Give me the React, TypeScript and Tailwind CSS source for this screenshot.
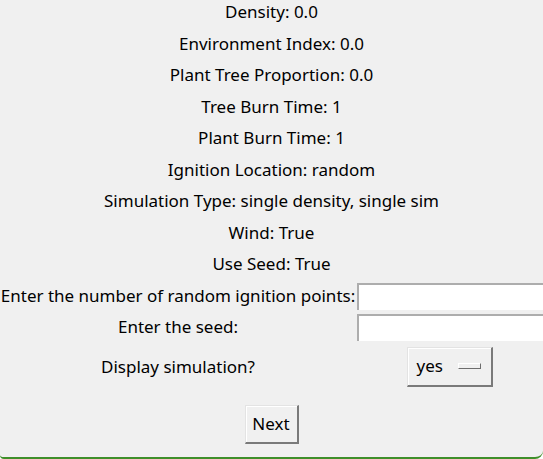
import React from "react";

const font = { fontFamily: '"Noto Sans", "Open Sans", sans-serif' };

function Row({ children }: { children: React.ReactNode }) {
  return (
    <div className="h-[31.5px] flex items-center justify-center whitespace-nowrap text-[17px] text-black">
      {children}
    </div>
  );
}

function Entry() {
  return (
    <div className="h-[27px] w-[200px] bg-white border-t-2 border-l-2 border-[#adadad]" />
  );
}

export default function App() {
  const info = [
    "Density: 0.0",
    "Environment Index: 0.0",
    "Plant Tree Proportion: 0.0",
    "Tree Burn Time: 1",
    "Plant Burn Time: 1",
    "Ignition Location: random",
    "Simulation Type: single density, single sim",
    "Wind: True",
    "Use Seed: True",
  ];
  return (
    <div className="w-[543px] h-[459px] bg-white overflow-hidden" style={font}>
      <div className="w-[543px] h-[459px] bg-[#f0f0f0] border-b-2 border-[#3f8f2a] rounded-bl-[4px] rounded-br-[8px] overflow-hidden flex flex-col">
        <div className="mt-[-4px] mb-[1px] flex flex-col">
          {info.map((t) => (
            <Row key={t}>{t}</Row>
          ))}
        </div>
        <div className="grid grid-cols-[356px_187px] text-[17px] text-black">
          <div className="h-[31px] flex items-center justify-center whitespace-nowrap">
            Enter the number of random ignition points:
          </div>
          <div className="h-[31px] flex items-center pl-[1px] pt-[1px]">
            <Entry />
          </div>
          <div className="h-[31px] flex items-center justify-center whitespace-nowrap">
            Enter the seed:
          </div>
          <div className="h-[31px] flex items-center pl-[1px]">
            <Entry />
          </div>
          <div className="h-[48px] flex items-center justify-center whitespace-nowrap">
            Display simulation?
          </div>
          <div className="h-[48px] flex items-center justify-center">
            <div className="w-[86px] h-[40px] flex items-center pl-[9px] gap-[15px] bg-[#f0f0f0] border-t border-l border-[#e3e3e3] border-r-2 border-b-2 border-r-[#7a7a7a] border-b-[#7a7a7a] shadow-[inset_1px_1px_0_#ffffff]">
              <span className="pb-[1px]">yes</span>
              <div className="w-[23px] h-[6px] bg-[#f0f0f0] border-t border-l border-[#ffffff] border-r border-b border-r-[#6d6d6d] border-b-[#6d6d6d]" />
            </div>
          </div>
        </div>
        <div className="flex justify-center mt-[14px]">
          <div className="w-[54px] h-[39px] flex items-center justify-center text-[17px] text-black bg-[#f0f0f0] border-t border-l border-[#e3e3e3] border-r-2 border-b-2 border-r-[#7a7a7a] border-b-[#7a7a7a] shadow-[inset_1px_1px_0_#ffffff]">
            Next
          </div>
        </div>
      </div>
    </div>
  );
}
